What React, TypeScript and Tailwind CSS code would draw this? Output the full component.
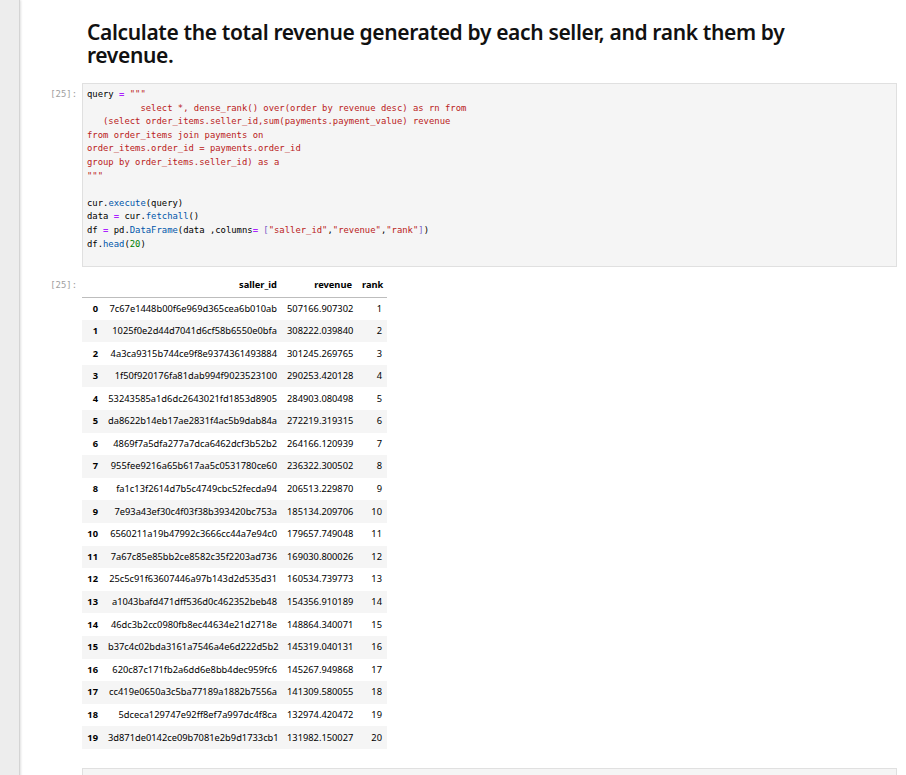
import React from "react";

type Seg = [string, string?];

const RED = "text-[#ba2121]";
const OP = "text-[#aa22ff] font-bold";
const PROP = "text-[#0055aa]";
const NUM = "text-[#008000]";

// code cell lines, split into coloured pieces
const codeLines: Seg[][] = [
  [["query "], [ "=", OP ], [" "], ['"""', RED]],
  [["          select *, dense_rank() over(order by revenue desc) as rn from", RED]],
  [["   (select order_items.seller_id,sum(payments.payment_value) revenue", RED]],
  [["from order_items join payments on", RED]],
  [["order_items.order_id = payments.order_id", RED]],
  [["group by order_items.seller_id) as a", RED]],
  [['"""', RED]],
  [],
  [["cur."], ["execute", PROP], ["(query)"]],
  [["data "], ["=", OP], [" cur."], ["fetchall", PROP], ["()"]],
  [
    ["df "],
    ["=", OP],
    [" pd."],
    ["DataFrame", PROP],
    ["(data ,columns"],
    ["=", OP],
    [" "],
    ["[", "text-[#7b5fc7]"],
    ['"saller_id"', RED],
    [","],
    ['"revenue"', RED],
    [","],
    ['"rank"', RED],
    ["]", "text-[#7b5fc7]"],
    [")"],
  ],
  [["df."], ["head", PROP], ["("], ["20", NUM], [")"]],
  [],
];

const rows: [string, string, number][] = [
  ["7c67e1448b00f6e969d365cea6b010ab", "507166.907302", 1],
  ["1025f0e2d44d7041d6cf58b6550e0bfa", "308222.039840", 2],
  ["4a3ca9315b744ce9f8e9374361493884", "301245.269765", 3],
  ["1f50f920176fa81dab994f9023523100", "290253.420128", 4],
  ["53243585a1d6dc2643021fd1853d8905", "284903.080498", 5],
  ["da8622b14eb17ae2831f4ac5b9dab84a", "272219.319315", 6],
  ["4869f7a5dfa277a7dca6462dcf3b52b2", "264166.120939", 7],
  ["955fee9216a65b617aa5c0531780ce60", "236322.300502", 8],
  ["fa1c13f2614d7b5c4749cbc52fecda94", "206513.229870", 9],
  ["7e93a43ef30c4f03f38b393420bc753a", "185134.209706", 10],
  ["6560211a19b47992c3666cc44a7e94c0", "179657.749048", 11],
  ["7a67c85e85bb2ce8582c35f2203ad736", "169030.800026", 12],
  ["25c5c91f63607446a97b143d2d535d31", "160534.739773", 13],
  ["a1043bafd471dff536d0c462352beb48", "154356.910189", 14],
  ["46dc3b2cc0980fb8ec44634e21d2718e", "148864.340071", 15],
  ["b37c4c02bda3161a7546a4e6d222d5b2", "145319.040131", 16],
  ["620c87c171fb2a6dd6e8bb4dec959fc6", "145267.949868", 17],
  ["cc419e0650a3c5ba77189a1882b7556a", "141309.580055", 18],
  ["5dceca129747e92ff8ef7a997dc4f8ca", "132974.420472", 19],
  ["3d871de0142ce09b7081e2b9d1733cb1", "131982.150027", 20],
];

const mono = "font-['DejaVu_Sans_Mono','Liberation_Mono',monospace] text-[8.9px]";

const Prompt: React.FC<{ label?: string; className?: string }> = ({ label, className }) => (
  <div className={`w-[62px] shrink-0 pr-[5px] text-right text-[#9e9e9e] ${mono} ${className ?? ""}`}>
    {label}
  </div>
);

const App: React.FC = () => {
  return (
    <div className="flex min-h-screen bg-white font-['Noto_Sans','Open_Sans',sans-serif] text-black">
      {/* left gutter */}
      <div className="w-[20px] shrink-0 bg-[#ededed] border-r border-[#d4d4d4] shadow-[1px_0_2px_rgba(0,0,0,0.12)]" />

      <div className="flex-1 min-w-0 pt-[21px] pr-[9px]">
        {/* markdown heading */}
        <div className="flex">
          <Prompt />
          <h2 className="pl-[5px] pr-[100px] text-[21px] leading-[23px] font-semibold tracking-[-0.35px] text-[#111]">
            Calculate the total revenue generated by each seller, and rank them by revenue.
          </h2>
        </div>

        {/* code cell */}
        <div className="flex mt-[16px]">
          <Prompt label="[25]:" className="pt-[5px] leading-[13.6px]" />
          <div className="flex-1 h-[184px] border border-[#e0e0e0] bg-[#f5f5f5] pt-[4px] pl-[4px]">
            <pre className={`${mono} leading-[13.6px] text-black`}>
              {codeLines.map((line, i) => (
                <div key={i} className="h-[13.6px] whitespace-pre">
                  {line.map(([t, c], j) => (
                    <span key={j} className={c}>
                      {t}
                    </span>
                  ))}
                </div>
              ))}
            </pre>
          </div>
        </div>

        {/* output */}
        <div className="flex mt-[7px]">
          <Prompt label="[25]:" className="pt-[5px]" />
          <table className="table-fixed border-collapse text-[9.3px] w-[305px]">
            <thead>
              <tr className="h-[23px] border-b border-[#bdbdbd]">
                <th className="w-[21px]" />
                <th className="w-[179px] px-[5px] text-right font-bold">saller_id</th>
                <th className="w-[75px] px-[5px] text-right font-bold">revenue</th>
                <th className="w-[30px] px-[5px] text-right font-bold">rank</th>
              </tr>
            </thead>
            <tbody>
              {rows.map(([id, rev, rank], i) => (
                <tr key={i} className={`h-[22.6px] ${i % 2 === 1 ? "bg-[#f5f5f5]" : ""}`}>
                  <th className="pr-[5px] text-right font-bold">{i}</th>
                  <td className="px-[5px] text-right whitespace-nowrap">{id}</td>
                  <td className="px-[5px] text-right">{rev}</td>
                  <td className="px-[5px] text-right">{rank}</td>
                </tr>
              ))}
            </tbody>
          </table>
        </div>

        {/* next cell, cut off by the window */}
        <div className="flex mt-[19px]">
          <Prompt />
          <div className="flex-1 h-[40px] border border-[#e0e0e0] bg-[#f5f5f5]" />
        </div>
      </div>
    </div>
  );
};

export default App;
